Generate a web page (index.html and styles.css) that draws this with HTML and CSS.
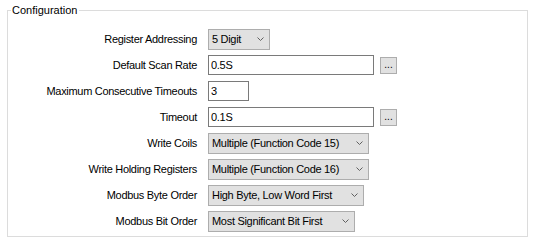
FILE: index.html
```html
<!DOCTYPE html>
<html lang="en">
<head>
    <meta charset="UTF-8">
    <title>Configuration</title>
    <link rel="stylesheet" href="styles.css">
</head>
<body>

    <fieldset class="group">
        <legend>Configuration</legend>

        <div class="form">
            <label>Register Addressing</label>
            <div class="combo w-digit">
                <span>5 Digit</span>
                <svg class="chevron" width="7" height="4" viewBox="0 0 7 4"><path d="M0.5 0.5 L3.5 3.5 L6.5 0.5" fill="none" stroke="#606060" stroke-width="1"/></svg>
            </div>

            <label>Default Scan Rate</label>
            <div class="field">
                <input type="text" class="text w-long" value="0.5S">
                <button type="button" class="browse">...</button>
            </div>

            <label>Maximum Consecutive Timeouts</label>
            <div class="field">
                <input type="text" class="text w-short" value="3">
            </div>

            <label>Timeout</label>
            <div class="field">
                <input type="text" class="text w-long" value="0.1S">
                <button type="button" class="browse">...</button>
            </div>

            <label>Write Coils</label>
            <div class="combo w-code">
                <span>Multiple (Function Code 15)</span>
                <svg class="chevron" width="7" height="4" viewBox="0 0 7 4"><path d="M0.5 0.5 L3.5 3.5 L6.5 0.5" fill="none" stroke="#606060" stroke-width="1"/></svg>
            </div>

            <label>Write Holding Registers</label>
            <div class="combo w-code">
                <span>Multiple (Function Code 16)</span>
                <svg class="chevron" width="7" height="4" viewBox="0 0 7 4"><path d="M0.5 0.5 L3.5 3.5 L6.5 0.5" fill="none" stroke="#606060" stroke-width="1"/></svg>
            </div>

            <label>Modbus Byte Order</label>
            <div class="combo w-byte">
                <span>High Byte, Low Word First</span>
                <svg class="chevron" width="7" height="4" viewBox="0 0 7 4"><path d="M0.5 0.5 L3.5 3.5 L6.5 0.5" fill="none" stroke="#606060" stroke-width="1"/></svg>
            </div>

            <label>Modbus Bit Order</label>
            <div class="combo w-bit">
                <span>Most Significant Bit First</span>
                <svg class="chevron" width="7" height="4" viewBox="0 0 7 4"><path d="M0.5 0.5 L3.5 3.5 L6.5 0.5" fill="none" stroke="#606060" stroke-width="1"/></svg>
            </div>
        </div>
    </fieldset>

</body>
</html>
```

FILE: styles.css
```css
body {
    margin: 0;
    background: #ffffff;
    font-family: "Liberation Sans", Arial, sans-serif;
    font-size: 11px;
    letter-spacing: -0.3px;
    color: #000000;
}
.group {
    margin: 4px 8px 0 7px;
    padding: 0 0 2px 0;
    border: 1px solid #dcdcdc;
    height: 233px;
    box-sizing: border-box;
}
.group legend {
    margin-left: 3px;
    padding: 0 2px 0 1px;
    line-height: 13px;
    letter-spacing: 0;
}
.form {
    display: grid;
    grid-template-columns: 189px 1fr;
    grid-auto-rows: 26px;
    column-gap: 11px;
    padding-top: 9px;
}
.form label {
    text-align: right;
    align-self: center;
    white-space: nowrap;
}
.field {
    display: flex;
    align-items: center;
    gap: 6px;
}
.text {
    height: 20px;
    box-sizing: border-box;
    margin: 0;
    padding: 0 2px;
    border: 1px solid #7a7a7a;
    font: inherit;
    letter-spacing: inherit;
    color: #000000;
    background: #ffffff;
    outline: none;
}
.w-long {
    width: 166px;
}
.w-short {
    width: 41px;
}
.browse {
    width: 17px;
    height: 17px;
    box-sizing: border-box;
    margin: 0;
    padding: 0 0 3px 0;
    border: 1px solid #adadad;
    background: #e1e1e1;
    font: inherit;
    font-size: 10px;
    line-height: 10px;
    color: #000000;
    display: flex;
    align-items: flex-end;
    justify-content: center;
}
.combo {
    align-self: center;
    height: 21px;
    box-sizing: border-box;
    border: 1px solid #adadad;
    background: #e1e1e1;
    display: flex;
    align-items: center;
    justify-content: space-between;
    padding: 0 5px 0 3px;
}
.w-digit {
    width: 62px;
}
.w-code {
    width: 161px;
}
.w-byte {
    width: 156px;
}
.w-bit {
    width: 147px;
}
.chevron {
    display: block;
    flex-shrink: 0;
}
```
